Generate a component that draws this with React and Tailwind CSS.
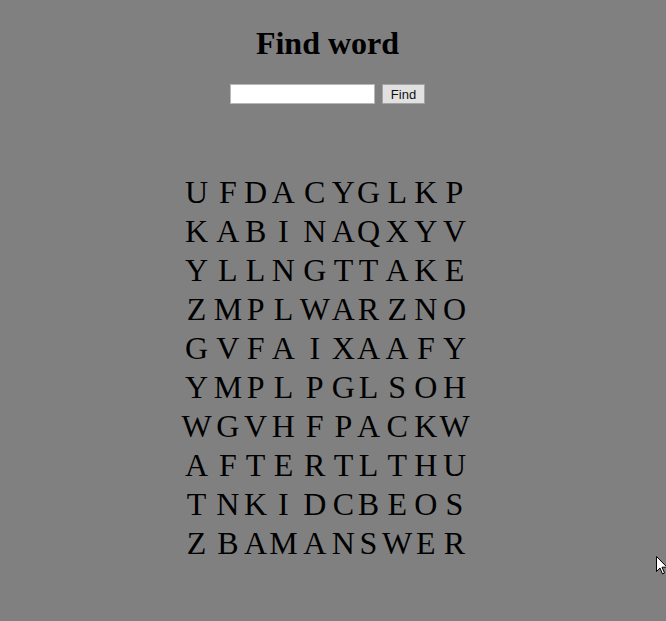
const rows = [
  'UFDACYGLKP',
  'KABINAQXYV',
  'YLLNGTTAKE',
  'ZMPLWARZNO',
  'GVFAIXAAFY',
  'YMPLPGLSOH',
  'WGVHFPACKW',
  'AFTERTLTHU',
  'TNKIDCBEOS',
  'ZBAMANSWER',
];

function Cursor() {
  return (
    <svg className="absolute left-[656px] top-[556px]" width="12" height="19" viewBox="0 0 12 19">
      <path d="M0.5 0.5 L0.5 15.5 L4 12 L6.5 18 L8.5 17 L6 11.2 L11 11.2 Z" fill="#fff" stroke="#000" strokeWidth="1" />
    </svg>
  );
}

export default function App() {
  return (
    <div className="relative min-h-screen bg-[#808080] font-['Liberation_Serif',serif] text-black">
      <div className="w-[655px] flex flex-col items-center">
        <h1 className="mt-[25px] text-[32px] font-bold leading-[normal]">Find word</h1>
        <div className="mt-[22px] flex items-center">
          <input
            type="text"
            className="w-[145px] h-[20px] bg-white border border-[#b8b8b8] outline-none"
          />
          <button className="ml-[7px] w-[43px] h-[20px] bg-[#e1e1e1] border border-[#a3a3a3] font-['Liberation_Sans',Arial,sans-serif] text-[13px] leading-none text-[#111]">
            Find
          </button>
        </div>
        <table className="mt-[69px] mr-[4px]">
          <tbody>
            {rows.map((row, i) => (
              <tr key={i}>
                {row.split('').map((ch, j) => (
                  <td key={j} className="p-[1px] text-center text-[32px] leading-[normal]">
                    {ch}
                  </td>
                ))}
              </tr>
            ))}
          </tbody>
        </table>
      </div>
      <Cursor />
    </div>
  );
}
